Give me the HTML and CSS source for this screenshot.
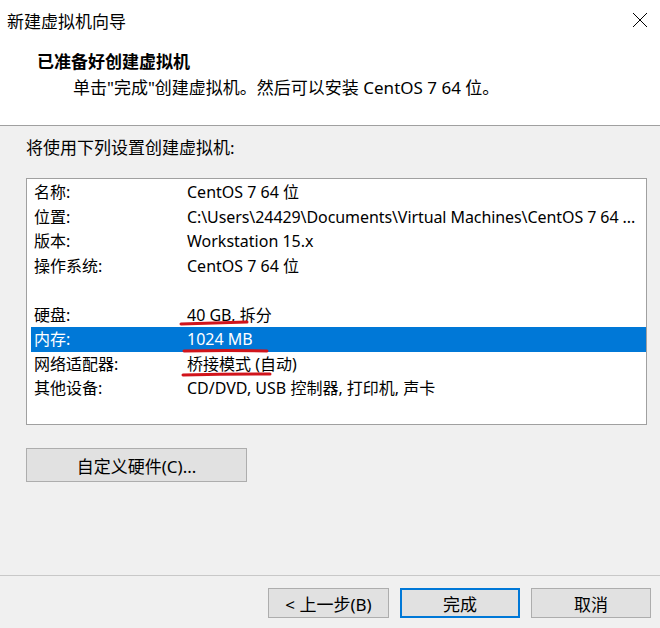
FILE: index.html
```html
<!DOCTYPE html>
<html lang="zh">
<head>
    <meta charset="UTF-8">
    <title>新建虚拟机向导</title>
    <link rel="stylesheet" href="styles.css">
</head>
<body>
    <div class="wizard">
        <div class="top">
            <div class="titlebar">
                <span class="title">新建虚拟机向导</span>
                <svg class="close" width="16" height="16" viewBox="0 0 16 16">
                    <path d="M1 1 L15 15 M15 1 L1 15" stroke="#000" stroke-width="1" fill="none"/>
                </svg>
            </div>
            <div class="header">
                <h1>已准备好创建虚拟机</h1>
                <p>单击"完成"创建虚拟机。然后可以安装 CentOS 7 64 位。</p>
            </div>
        </div>
        <div class="content">
            <div class="intro">将使用下列设置创建虚拟机:</div>
            <div class="summary">
                <div class="row"><span>名称:</span><span>CentOS 7 64 位</span></div>
                <div class="row"><span>位置:</span><span class="path">C:\Users\24429\Documents\Virtual Machines\CentOS 7 64 ...</span></div>
                <div class="row"><span>版本:</span><span>Workstation 15.x</span></div>
                <div class="row"><span>操作系统:</span><span>CentOS 7 64 位</span></div>
                <div class="row"></div>
                <div class="row"><span>硬盘:</span><span>40 GB, 拆分</span></div>
                <div class="row selected"><span>内存:</span><span>1024 MB</span></div>
                <div class="row"><span>网络适配器:</span><span>桥接模式 (自动)</span></div>
                <div class="row"><span>其他设备:</span><span>CD/DVD, USB 控制器, 打印机, 声卡</span></div>
                <!-- hand-drawn red marks -->
                <svg class="marks" width="620" height="245" viewBox="0 0 620 245">
                    <path d="M154 145 Q185 144 220 143" />
                    <path d="M157 172 Q200 171 240 172" />
                    <path d="M156 196 Q200 195 243 195" />
                </svg>
            </div>
            <button class="btn custom">自定义硬件(C)...</button>
        </div>
        <div class="footer">
            <button class="btn back">&lt; 上一步(B)</button>
            <button class="btn finish">完成</button>
            <button class="btn">取消</button>
        </div>
    </div>
</body>
</html>
```

FILE: styles.css
```css
body {
    margin: 0;
    background-color: #f0f0f0;
    font-family: "Noto Sans", "Noto Sans CJK SC", sans-serif;
    font-size: 17px;
    color: #000;
}
.wizard {
    width: 660px;
    height: 628px;
    display: flex;
    flex-direction: column;
}
.top {
    background-color: #fff;
    height: 125px;
    border-bottom: 1px solid #a0a0a0;
}
.titlebar {
    height: 40px;
    display: flex;
    align-items: center;
    justify-content: space-between;
    padding: 0 12px 0 7px;
}
.header h1 {
    font-size: 17px;
    font-weight: bold;
    line-height: 20px;
    margin: 12px 0 0 37px;
}
.header p {
    line-height: 20px;
    margin: 6px 0 0 73px;
}
.content {
    flex: 1;
    padding: 12px 13px 0 26px;
}
.intro {
    line-height: 20px;
}
.summary {
    position: relative;
    margin-top: 20px;
    width: 621px;
    height: 247px;
    box-sizing: border-box;
    border: 1px solid #a0a0a0;
    background-color: #fff;
    padding: 1px 0 0 4px;
    font-size: 16px;
}
.row {
    display: grid;
    grid-template-columns: 153px 1fr;
    height: 24.5px;
    line-height: 24.5px;
    padding-left: 3px;
    white-space: nowrap;
    overflow: hidden;
}
.row .path {
    letter-spacing: -0.08px;
}
.row.selected {
    background-color: #0078d7;
    color: #fff;
}
.marks {
    position: absolute;
    left: 0;
    top: 0;
}
.marks path {
    stroke: #d1141b;
    stroke-width: 3;
    stroke-linecap: round;
    fill: none;
}
.btn {
    font-family: inherit;
    font-size: 17px;
    color: #000;
    background-color: #e1e1e1;
    border: 1px solid #adadad;
    height: 30px;
    width: 120px;
    padding: 0;
}
.custom {
    margin-top: 23px;
    width: 221px;
    height: 34px;
}
.footer {
    border-top: 1px solid #c8c8c8;
    display: flex;
    justify-content: flex-end;
    gap: 11px;
    padding: 12px 9px 10px;
}
.back {
    width: 121px;
}
.finish {
    border: 2px solid #0078d7;
}
```
